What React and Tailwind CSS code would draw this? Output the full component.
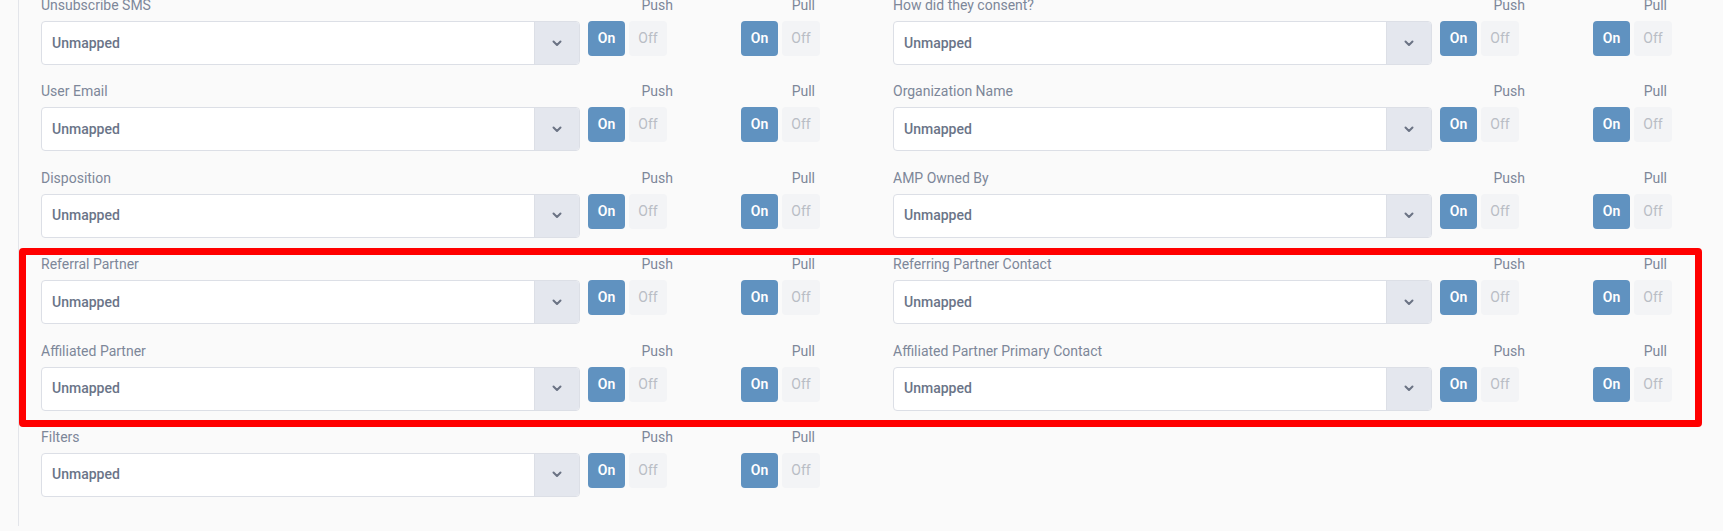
const rows = [
  ["Unsubscribe SMS", "How did they consent?"],
  ["User Email", "Organization Name"],
  ["Disposition", "AMP Owned By"],
  ["Referral Partner", "Referring Partner Contact"],
  ["Affiliated Partner", "Affiliated Partner Primary Contact"],
  ["Filters", null],
];

const Chevron = () => (
  <svg width="10" height="7" viewBox="0 0 10 7" fill="none">
    <path d="M1.5 1.5L5 5l3.5-3.5" stroke="#6b7384" strokeWidth="2" strokeLinecap="round" strokeLinejoin="round" />
  </svg>
);

const Toggle = () => (
  <div className="flex gap-[4px]">
    <button className="h-[35px] w-[37px] rounded-[4px] bg-[#6092c0] text-[14px] font-semibold text-white">On</button>
    <button className="h-[35px] w-[38px] rounded-[4px] bg-[#f3f4f6] text-[14px] text-[#b9bdc5]">Off</button>
  </div>
);

const Field = ({ label }) => (
  <div className="flex">
    <div className="mr-[8px] flex w-[539px] flex-col">
      <div className="mb-[6px] h-5 text-[14px] leading-5 text-[#7d8799]">{label}</div>
      <div className="flex h-[44px] overflow-hidden rounded-[4px] border border-[#dcdfe6] bg-white">
        <div className="flex flex-1 items-center pl-[10px] text-[14px] font-medium text-[#6a7488]">Unmapped</div>
        <div className="flex w-[45px] items-center justify-center border-l border-[#dcdfe6] bg-[#e4e7ee]">
          <Chevron />
        </div>
      </div>
    </div>
    <div className="flex w-[153px] flex-col">
      <div className="mb-[6px] h-5 w-[85px] text-right text-[14px] leading-5 text-[#7d8799]">Push</div>
      <Toggle />
    </div>
    <div className="flex flex-col">
      <div className="mb-[6px] h-5 w-[74px] text-right text-[14px] leading-5 text-[#7d8799]">Pull</div>
      <Toggle />
    </div>
  </div>
);

export default function App() {
  return (
    <div className="relative h-[531px] overflow-hidden bg-[#fafafa]" style={{ fontFamily: "Roboto, 'Liberation Sans', sans-serif" }}>
      <div className="ml-[18px] h-full border-l border-[#e3e5ea] pl-[22px]">
        <div className="-mt-[5px] grid grid-cols-[852px_1fr] gap-y-[16.4px]">
          {rows.map(([a, b]) => (
            <>
              <Field key={a} label={a} />
              {b ? <Field key={b} label={b} /> : <div key="empty" />}
            </>
          ))}
        </div>
      </div>
      <div className="pointer-events-none absolute left-[19px] top-[248px] h-[179px] w-[1683px] rounded-[4px] border-[7px] border-[#ff0000]" />
    </div>
  );
}
